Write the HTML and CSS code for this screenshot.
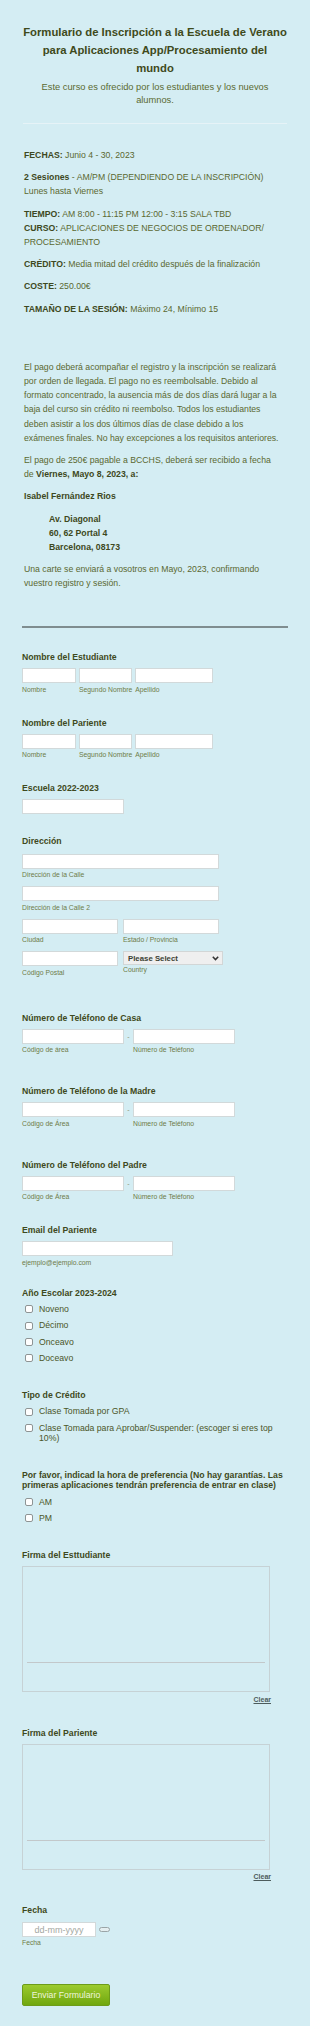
FILE: index.html
```html
<!DOCTYPE html>
<html lang="es">
<head>
    <meta charset="UTF-8">
    <meta name="viewport" content="width=device-width, initial-scale=1.0">
    <title>Formulario de Inscripción - Escuela de Verano</title>
    <link rel="stylesheet" href="styles.css">
</head>
<body>

    <div class="container">

        <!-- Header -->
        <div class="form-header">
            <h1>Formulario de Inscripción a la Escuela de Verano para Aplicaciones App/Procesamiento del<br>mundo</h1>
            <div class="subheader">Este curso es ofrecido por los estudiantes y los nuevos alumnos.</div>
        </div>
        <div class="header-rule"></div>

        <!-- Course info -->
        <div class="info">
            <p><b>FECHAS:</b> Junio 4 - 30, 2023</p>
            <p><b>2 Sesiones</b> - AM/PM (DEPENDIENDO DE LA INSCRIPCIÓN)<br>Lunes hasta Viernes</p>
            <p><b>TIEMPO:</b> AM 8:00 - 11:15 PM 12:00 - 3:15 SALA TBD<br><b>CURSO:</b> APLICACIONES DE NEGOCIOS DE ORDENADOR/<br>PROCESAMIENTO</p>
            <p><b>CRÉDITO:</b> Media mitad del crédito después de la finalización</p>
            <p><b>COSTE:</b> 250.00€</p>
            <p><b>TAMAÑO DE LA SESIÓN:</b> Máximo 24, Mínimo 15</p>
        </div>

        <div class="info payment">
            <p>El pago deberá acompañar el registro y la inscripción se realizará por orden de llegada. El pago no es reembolsable. Debido al formato concentrado, la ausencia más de dos días dará lugar a la baja del curso sin crédito ni reembolso. Todos los estudiantes deben asistir a los dos últimos días de clase debido a los exámenes finales. No hay excepciones a los requisitos anteriores.</p>
            <p>El pago de 250€ pagable a BCCHS, deberá ser recibido a fecha<br>de <b>Viernes, Mayo 8, 2023, a:</b></p>
            <p><b>Isabel Fernández Rios</b></p>
            <p class="address">Av. Diagonal<br>60, 62 Portal 4<br>Barcelona, 08173</p>
            <p>Una carte se enviará a vosotros en Mayo, 2023, confirmando vuestro registro y sesión.</p>
        </div>

        <div class="divider"></div>

        <!-- Form fields -->
        <form class="form" onsubmit="return false">

            <div class="form-line">
                <label class="form-label">Nombre del Estudiante</label>
                <div class="name-row">
                    <span class="field w-first"><input class="text" type="text"><span class="sub">Nombre</span></span>
                    <span class="field w-middle"><input class="text" type="text"><span class="sub">Segundo Nombre</span></span>
                    <span class="field w-last"><input class="text" type="text"><span class="sub">Apellido</span></span>
                </div>
            </div>

            <div class="form-line">
                <label class="form-label">Nombre del Pariente</label>
                <div class="name-row">
                    <span class="field w-first"><input class="text" type="text"><span class="sub">Nombre</span></span>
                    <span class="field w-middle"><input class="text" type="text"><span class="sub">Segundo Nombre</span></span>
                    <span class="field w-last"><input class="text" type="text"><span class="sub">Apellido</span></span>
                </div>
            </div>

            <div class="form-line short">
                <label class="form-label">Escuela 2022-2023</label>
                <input class="text w-school" type="text">
            </div>

            <div class="form-line wide-after">
                <label class="form-label addr-label">Dirección</label>
                <div class="addr-grid">
                    <span class="field full"><input class="text" type="text"><span class="sub">Dirección de la Calle</span></span>
                    <span class="field full"><input class="text" type="text"><span class="sub">Dirección de la Calle 2</span></span>
                    <span class="field"><input class="text" type="text"><span class="sub">Ciudad</span></span>
                    <span class="field"><input class="text" type="text"><span class="sub">Estado / Provincia</span></span>
                    <span class="field"><input class="text" type="text"><span class="sub">Código Postal</span></span>
                    <span class="field">
                        <span class="select-wrap">
                            <select class="select"><option>Please Select</option></select>
                            <svg class="chevron" width="7" height="5" viewBox="0 0 7 5"><path d="M0.8 0.8 L3.5 3.6 L6.2 0.8" fill="none" stroke="#333" stroke-width="1.5"/></svg>
                        </span>
                        <span class="sub country">Country</span>
                    </span>
                </div>
            </div>

            <div class="form-line phone">
                <label class="form-label">Número de Teléfono de Casa</label>
                <div class="phone-row">
                    <span class="field w-phone"><input class="text" type="text"><span class="sub">Código de área</span></span>
                    <span class="dash">-</span>
                    <span class="field w-phone"><input class="text" type="text"><span class="sub">Número de Teléfono</span></span>
                </div>
            </div>

            <div class="form-line phone">
                <label class="form-label">Número de Teléfono de la Madre</label>
                <div class="phone-row">
                    <span class="field w-phone"><input class="text" type="text"><span class="sub">Código de Área</span></span>
                    <span class="dash">-</span>
                    <span class="field w-phone"><input class="text" type="text"><span class="sub">Número de Teléfono</span></span>
                </div>
            </div>

            <div class="form-line">
                <label class="form-label">Número de Teléfono del Padre</label>
                <div class="phone-row">
                    <span class="field w-phone"><input class="text" type="text"><span class="sub">Código de Área</span></span>
                    <span class="dash">-</span>
                    <span class="field w-phone"><input class="text" type="text"><span class="sub">Número de Teléfono</span></span>
                </div>
            </div>

            <div class="form-line email">
                <label class="form-label">Email del Pariente</label>
                <input class="text w-email" type="text">
                <span class="sub">ejemplo@ejemplo.com</span>
            </div>

            <div class="form-line">
                <label class="form-label tight">Año Escolar 2023-2024</label>
                <label class="option"><input type="checkbox"><span>Noveno</span></label>
                <label class="option"><input type="checkbox"><span>Décimo</span></label>
                <label class="option"><input type="checkbox"><span>Onceavo</span></label>
                <label class="option"><input type="checkbox"><span>Doceavo</span></label>
            </div>

            <div class="form-line">
                <label class="form-label tight">Tipo de Crédito</label>
                <label class="option"><input type="checkbox"><span>Clase Tomada por GPA</span></label>
                <label class="option"><input type="checkbox"><span>Clase Tomada para Aprobar/Suspender: (escoger si eres top 10%)</span></label>
            </div>

            <div class="form-line">
                <label class="form-label tight">Por favor, indicad la hora de preferencia (No hay garantías. Las primeras aplicaciones tendrán preferencia de entrar en clase)</label>
                <label class="option"><input type="checkbox"><span>AM</span></label>
                <label class="option"><input type="checkbox"><span>PM</span></label>
            </div>

            <div class="form-line">
                <label class="form-label">Firma del Esttudiante</label>
                <div class="sig-pad"><div class="sig-line"></div></div>
                <div class="sig-clear"><a href="#">Clear</a></div>
            </div>

            <div class="form-line">
                <label class="form-label">Firma del Pariente</label>
                <div class="sig-pad"><div class="sig-line"></div></div>
                <div class="sig-clear"><a href="#">Clear</a></div>
            </div>

            <div class="form-line">
                <label class="form-label date-label">Fecha</label>
                <div class="date-row">
                    <input class="text w-date" type="text" placeholder="dd-mm-yyyy">
                    <svg class="cal-icon" width="11" height="5" viewBox="0 0 11 5"><rect x="0.5" y="0.5" width="10" height="4" rx="2" fill="#e4eef0" stroke="#9aa4a6"/></svg>
                </div>
                <span class="sub date-sub">Fecha</span>
            </div>

            <div class="buttons">
                <button class="submit" type="submit">Enviar Formulario</button>
            </div>

        </form>
    </div>

</body>
</html>
```

FILE: styles.css
```css
body {
    margin: 0;
    background-color: #d4edf3;
    font-family: "Liberation Sans", Arial, sans-serif;
    color: #5a6830;
}
.container {
    padding: 23px 22px 23px;
}
h1 {
    margin: 0;
    font-size: 11.3px;
    line-height: 18px;
    text-align: center;
    color: #3f4a1b;
}
.subheader {
    margin-top: 3.5px;
    padding: 0 10px;
    font-size: 9.3px;
    line-height: 13px;
    text-align: center;
    color: #5b6a30;
}
.header-rule {
    margin: 16px 1px 0;
    border-top: 1px solid #e6f3f7;
}
.info {
    margin-top: 24.5px;
    padding: 0 6px 0 2px;
    font-size: 8.7px;
    line-height: 14.2px;
}
.info p {
    margin: 0 0 8px;
}
.info b {
    color: #3d4821;
}
.payment {
    margin-top: 44px;
}
.address {
    padding-left: 25px;
    font-weight: bold;
    color: #3d4821;
}
.divider {
    margin-top: 35px;
    border-top: 2px solid #7f8d8f;
}
.form {
    margin: 0;
    padding-top: 12.5px;
}
.form-line {
    padding: 12px 0;
}
.form-line.short {
    padding-bottom: 10px;
}
.form-line.phone {
    padding-bottom: 20px;
}
.form-line.wide-after {
    padding-bottom: 24px;
}
.form-line.email {
    padding-bottom: 9px;
}
.form-label {
    display: block;
    margin-bottom: 5px;
    font-size: 8.7px;
    font-weight: bold;
    line-height: 11px;
    color: #3e4920;
}
.form-label.tight {
    margin-bottom: 2.5px;
    line-height: 10.5px;
}
.addr-label {
    margin-bottom: 6.5px;
}
.date-label {
    margin-bottom: 6px;
}
.text {
    display: block;
    box-sizing: border-box;
    height: 15px;
    margin: 0;
    padding: 0 3px;
    background-color: #fff;
    border: 1px solid #d2d9da;
    border-radius: 0;
    font-family: inherit;
    font-size: 8px;
}
.field {
    display: block;
}
.sub {
    display: block;
    margin-top: 1.5px;
    font-size: 6.8px;
    line-height: 9px;
    color: #6e7c48;
}
.name-row {
    display: flex;
    gap: 3px;
}
.w-first .text { width: 54px; }
.w-middle .text { width: 53px; }
.w-last .text { width: 78px; }
.w-school { width: 102px; }
.w-email { width: 151px; }
.w-phone .text { width: 102px; }
.addr-grid {
    display: grid;
    grid-template-columns: 96px 96px;
    column-gap: 5px;
    row-gap: 7px;
}
.addr-grid .full {
    grid-column: 1 / 3;
}
.addr-grid .text {
    width: 100%;
}
.select-wrap {
    position: relative;
    display: block;
    width: 100px;
}
.select {
    display: block;
    box-sizing: border-box;
    width: 100px;
    height: 14px;
    margin: 0;
    padding: 0 0 0 4px;
    -webkit-appearance: none;
    appearance: none;
    background-color: #efefef;
    border: 1px solid #d2d6d6;
    border-radius: 0;
    font-family: inherit;
    font-size: 7.8px;
    font-weight: bold;
    color: #3b3f33;
}
.chevron {
    position: absolute;
    right: 4px;
    top: 5px;
}
.sub.country {
    margin-top: 0;
}
.phone-row {
    display: flex;
    align-items: flex-start;
}
.dash {
    width: 9px;
    font-size: 7px;
    line-height: 15px;
    text-align: center;
    color: #8a9470;
}
.option {
    display: flex;
    align-items: flex-start;
    padding: 3.2px 0;
    font-size: 8.7px;
    line-height: 10px;
    color: #4b5628;
}
.option input {
    flex: none;
    box-sizing: border-box;
    width: 8px;
    height: 8px;
    margin: 1.5px 6px 0 3px;
    -webkit-appearance: none;
    appearance: none;
    background-color: #fff;
    border: 1px solid #8e9494;
    border-radius: 2px;
}
.sig-pad {
    box-sizing: border-box;
    width: 248px;
    height: 126px;
    padding: 95px 4px 0;
    border: 1px solid #c6d2d5;
}
.sig-line {
    border-top: 1px solid #c2c8ca;
}
.sig-clear {
    width: 249px;
    margin-top: 2.5px;
    text-align: right;
    font-size: 7px;
    line-height: 9px;
}
.sig-clear a {
    font-weight: bold;
    color: #4d5c5c;
}
.date-row {
    display: flex;
    align-items: center;
}
.w-date {
    width: 74px;
    text-align: center;
    font-size: 9px;
}
.w-date::placeholder {
    color: #a3a8a3;
}
.cal-icon {
    margin-left: 3px;
}
.sub.date-sub {
    margin-top: 0.5px;
}
.buttons {
    padding-top: 25px;
}
.submit {
    display: block;
    box-sizing: border-box;
    width: 88px;
    height: 22px;
    margin: 0;
    padding: 0;
    background: linear-gradient(#9ccb2e, #70a70f);
    border: 1px solid #6d9c19;
    border-radius: 2px;
    font-family: inherit;
    font-size: 8.7px;
    color: #eef5dc;
    cursor: pointer;
}
```
